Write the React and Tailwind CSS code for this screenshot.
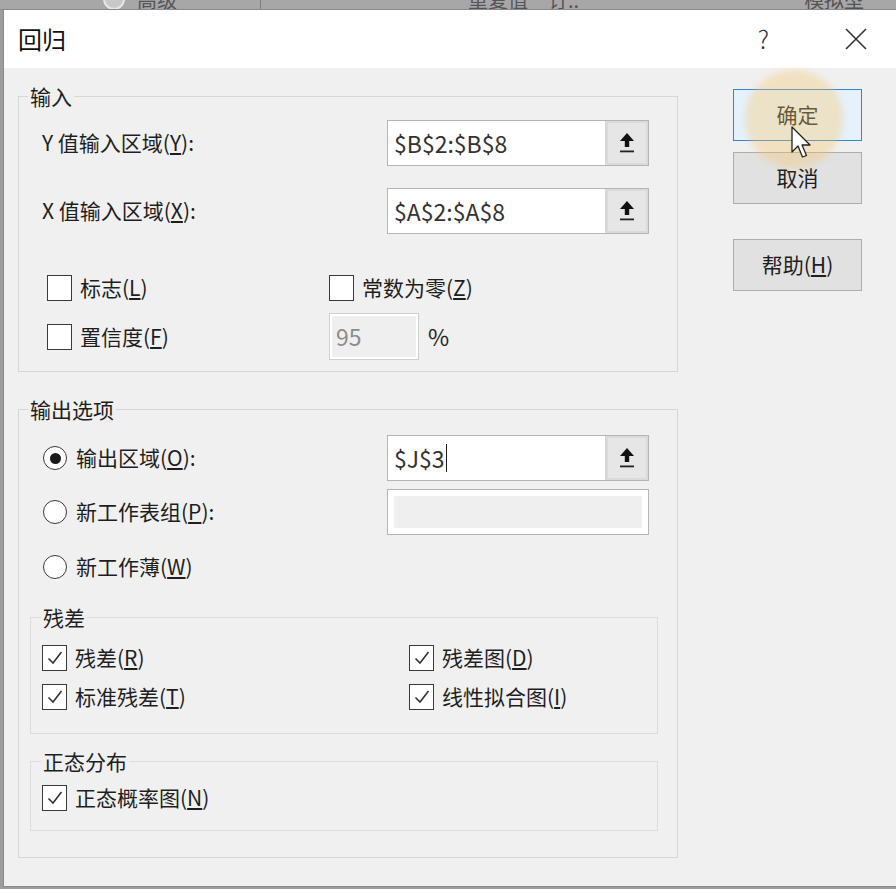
import React from 'react';

const font = "font-['Noto_Sans_CJK_SC','Noto_Sans',sans-serif]";

function UpArrow() {
  return (
    <svg width="18" height="24" viewBox="0 0 18 24">
      <path d="M9 2 L16 10 H11.2 V16 H6.8 V10 H2 Z" fill="#111" />
      <rect x="2" y="19.5" width="14" height="1.8" fill="#222" />
    </svg>
  );
}

function RefInput({ value, caret }) {
  return (
    <div className="flex w-[262px] h-[46px] border border-[#b5b5b5] bg-white">
      <div className="flex-1 flex items-center pl-[6px] text-[23px] text-[#333]">
        {value}
        {caret && <span className="ml-[1px] w-[1.5px] h-[28px] bg-[#222]" />}
      </div>
      <div className="w-[43px] h-full flex items-center justify-center bg-[#e6e6e6] border-l border-[#d4d4d4] shadow-[inset_0_0_0_2px_#dadada]">
        <UpArrow />
      </div>
    </div>
  );
}

function Check({ checked, children, className = '' }) {
  return (
    <div className={`flex items-center h-[30px] ${className}`}>
      <div className="w-[25px] h-[26px] border-[1.5px] border-[#3a3a3a] bg-white flex items-center justify-center">
        {checked && (
          <svg width="18" height="16" viewBox="0 0 18 16">
            <path d="M2.5 8.5 L7 13 L15.5 2" fill="none" stroke="#333" strokeWidth="1.6" />
          </svg>
        )}
      </div>
      <span className="ml-[8px] text-[21px] text-[#1e1e1e]">{children}</span>
    </div>
  );
}

function Radio({ checked, children }) {
  return (
    <div className="flex items-center">
      <div className="w-[24px] h-[24px] rounded-full border-[1.5px] border-[#3a3a3a] bg-white flex items-center justify-center">
        {checked && <div className="w-[11px] h-[11px] rounded-full bg-[#1a1a1a]" />}
      </div>
      <span className="ml-[9px] text-[21px] text-[#1e1e1e]">{children}</span>
    </div>
  );
}

function Legend({ children, className = '' }) {
  return (
    <legend className={`px-[2px] text-[21px] leading-[28px] text-[#1e1e1e] ${className}`}>
      {children}
    </legend>
  );
}

function Btn({ children, primary, className = '' }) {
  return (
    <button
      className={`w-[129px] h-[52px] flex items-center justify-center text-[21px] text-[#1e1e1e] ${
        primary ? 'bg-[#e5f1fb] border-[1.5px] border-[#2f86d4]' : 'bg-[#e1e1e1] border border-[#adadad]'
      } ${className}`}
    >
      {children}
    </button>
  );
}

export default function App() {
  return (
    <div className={`relative w-[896px] h-[889px] overflow-hidden bg-[#9c9c9c] ${font}`}>
      {/* sheet behind the dialog */}
      <div className="h-[10px] flex items-start bg-[#a7a7a7] border-b border-[#8a8a8a] text-[20px] leading-[20px] text-[#555] overflow-hidden whitespace-nowrap">
        <span className="ml-[103px] -mt-[12px] w-[22px] h-[22px] rounded-full border-2 border-[#e8e8e8] bg-[#c8c8c8]" />
        <span className="ml-[12px] -mt-[10px]">高级</span>
        <span className="ml-[83px] w-px h-full bg-[#7d7d7d]" />
        <span className="ml-[207px] -mt-[10px]">重复值　订..</span>
        <span className="ml-[225px] -mt-[10px]">模拟型</span>
      </div>

      <div className="ml-[3px] h-[877px] flex flex-col border-l border-b border-[#8a8a8a] bg-[#f0f0f0]">
        {/* title bar */}
        <div className="h-[58px] flex items-center bg-white">
          <span className="ml-[14px] text-[24px] text-[#111]">回归</span>
          <span className="ml-auto mr-[76px] text-[25px] font-light text-[#333]">?</span>
          <svg className="mr-[29px]" width="22" height="22" viewBox="0 0 22 22">
            <path d="M1 1 L21 21 M21 1 L1 21" stroke="#333" strokeWidth="1.6" />
          </svg>
        </div>

        {/* body */}
        <div className="flex">
          <div className="pl-[14px] pt-[14px]">
            {/* 输入 */}
            <fieldset className="w-[660px] border border-[#d7d7d7] pb-[11px]">
              <Legend className="ml-[9px]">输入</Legend>
              <div className="mt-[10px] flex items-center">
                <span className="pl-[23px] w-[368px] text-[21px] text-[#1e1e1e]">
                  Y 值输入区域(<u>Y</u>):
                </span>
                <RefInput value="$B$2:$B$8" />
              </div>
              <div className="mt-[22px] flex items-center">
                <span className="pl-[23px] w-[368px] text-[21px] text-[#1e1e1e]">
                  X 值输入区域(<u>X</u>):
                </span>
                <RefInput value="$A$2:$A$8" />
              </div>
              <div className="mt-[39px] flex pl-[28px]">
                <Check className="w-[282px]">
                  标志(<u>L</u>)
                </Check>
                <Check>
                  常数为零(<u>Z</u>)
                </Check>
              </div>
              <div className="mt-[10px] flex items-center pl-[28px]">
                <Check className="w-[282px]">
                  置信度(<u>F</u>)
                </Check>
                <div className="w-[90px] h-[47px] border border-[#cfcfcf] bg-white p-[2px]">
                  <div className="w-full h-full bg-[#efefef] flex items-center pl-[4px] text-[23px] text-[#8c8c8c]">
                    95
                  </div>
                </div>
                <span className="ml-[9px] text-[23px] text-[#1e1e1e]">%</span>
              </div>
            </fieldset>

            {/* 输出选项 */}
            <fieldset className="mt-[23px] w-[660px] border border-[#d7d7d7] pb-[26px]">
              <Legend className="ml-[9px]">输出选项</Legend>
              <div className="mt-[12px] flex items-center h-[46px]">
                <div className="pl-[24px] w-[368px]">
                  <Radio checked>
                    输出区域(<u>O</u>):
                  </Radio>
                </div>
                <RefInput value="$J$3" caret />
              </div>
              <div className="mt-[8px] flex items-center h-[46px]">
                <div className="pl-[24px] w-[368px]">
                  <Radio>
                    新工作表组(<u>P</u>):
                  </Radio>
                </div>
                <div className="w-[262px] h-[46px] border border-[#b5b5b5] bg-white p-[6px]">
                  <div className="w-full h-full bg-[#efefef]" />
                </div>
              </div>
              <div className="mt-[9px] flex items-center h-[46px] pl-[24px]">
                <Radio>
                  新工作薄(<u>W</u>)
                </Radio>
              </div>

              {/* 残差 */}
              <fieldset className="mt-[13px] ml-[11px] w-[628px] border border-[#dcdcdc] pb-[21px]">
                <Legend className="ml-[10px]">残差</Legend>
                <div className="mt-[12px] flex pl-[11px]">
                  <Check checked className="w-[367px]">
                    残差(<u>R</u>)
                  </Check>
                  <Check checked>
                    残差图(<u>D</u>)
                  </Check>
                </div>
                <div className="mt-[9px] flex pl-[11px]">
                  <Check checked className="w-[367px]">
                    标准残差(<u>T</u>)
                  </Check>
                  <Check checked>
                    线性拟合图(<u>I</u>)
                  </Check>
                </div>
              </fieldset>

              {/* 正态分布 */}
              <fieldset className="mt-[13px] ml-[11px] w-[628px] border border-[#dcdcdc] pb-[17px]">
                <Legend className="ml-[10px]">正态分布</Legend>
                <div className="mt-[8px] flex pl-[11px]">
                  <Check checked>
                    正态概率图(<u>N</u>)
                  </Check>
                </div>
              </fieldset>
            </fieldset>
          </div>

          {/* buttons */}
          <div className="ml-[55px] pt-[21px] flex flex-col">
            <Btn primary>确定</Btn>
            <Btn className="mt-[11px]">取消</Btn>
            <Btn className="mt-[35px]">
              帮助(<u>H</u>)
            </Btn>
          </div>
        </div>
      </div>

      {/* cursor highlight + pointer */}
      <div className="absolute left-[745px] top-[70px] w-[98px] h-[98px] rounded-full bg-[#f6c56a]/35 blur-[3px]" />
      <svg className="absolute left-[791px] top-[126px]" width="22" height="34" viewBox="0 0 22 34">
        <path d="M1 1 V26 L7 20 L11.5 31 L15.5 29.5 L11 19 H19 Z" fill="#fff" stroke="#222" strokeWidth="1.3" strokeLinejoin="round" />
      </svg>
    </div>
  );
}
